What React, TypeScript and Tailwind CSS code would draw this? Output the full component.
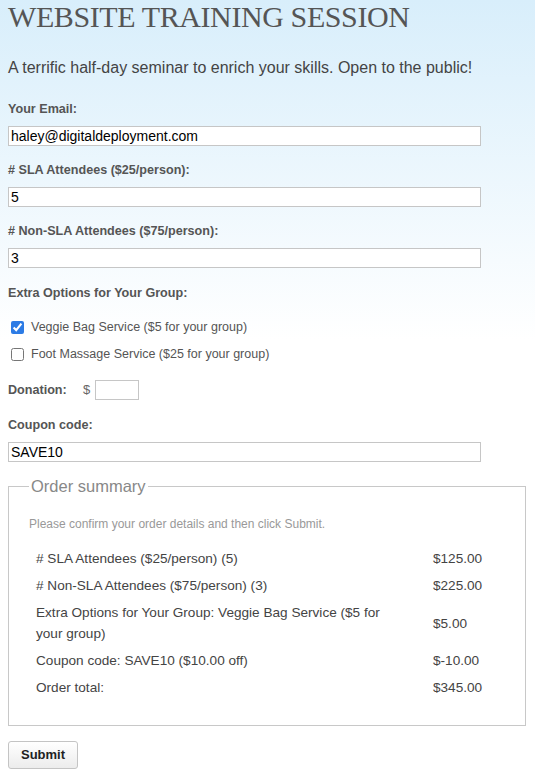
import React from 'react';

const sans = "font-['Liberation_Sans',Arial,sans-serif]";

function Field({ label, value, top }: { label: string; value: string; top: string }) {
  return (
    <div className={top}>
      <label className="block text-[12.6px] font-bold leading-[14px] text-[#555]">{label}</label>
      <input
        type="text"
        defaultValue={value}
        className="mt-[10px] block h-[20px] w-[473px] border border-[#c6c6c6] bg-white px-[2px] text-[14px] text-black outline-none"
      />
    </div>
  );
}

const rows: { desc: string; price: string }[] = [
  { desc: '# SLA Attendees ($25/person) (5)', price: '$125.00' },
  { desc: '# Non-SLA Attendees ($75/person) (3)', price: '$225.00' },
  { desc: 'Extra Options for Your Group: Veggie Bag Service ($5 for your group)', price: '$5.00' },
  { desc: 'Coupon code: SAVE10 ($10.00 off)', price: '$-10.00' },
  { desc: 'Order total:', price: '$345.00' },
];

export default function App() {
  return (
    <div className={`${sans} min-h-screen bg-[linear-gradient(#d8eefb,#ffffff_340px)] px-[8px] pb-[10px]`}>
      <h1 className="font-['Liberation_Serif','Times_New_Roman',serif] text-[30px] font-normal leading-[34px] tracking-[-0.4px] text-[#555]">
        WEBSITE TRAINING SESSION
      </h1>
      <p className="mt-[25px] text-[16px] leading-[18px] text-[#444]">
        A terrific half-day seminar to enrich your skills. Open to the public!
      </p>

      <form>
        <Field label="Your Email:" value="haley@digitaldeployment.com" top="mt-[25px]" />
        <Field label="# SLA Attendees ($25/person):" value="5" top="mt-[17px]" />
        <Field label="# Non-SLA Attendees ($75/person):" value="3" top="mt-[17px]" />

        <div className="mt-[18px] text-[12.6px] font-bold leading-[14px] text-[#555]">Extra Options for Your Group:</div>

        <div className="mt-[20px] flex flex-col gap-[13px] pl-[3px]">
          <label className="flex items-center gap-[7px] text-[12.5px] leading-[14px] text-[#555]">
            <input type="checkbox" defaultChecked className="m-0 h-[13px] w-[13px] accent-[#2c7be5]" />
            Veggie Bag Service ($5 for your group)
          </label>
          <label className="flex items-center gap-[7px] text-[12.5px] leading-[14px] text-[#555]">
            <input type="checkbox" className="m-0 h-[13px] w-[13px] accent-[#2c7be5]" />
            Foot Massage Service ($25 for your group)
          </label>
        </div>

        <div className="mt-[19px] flex items-center">
          <span className="w-[75px] text-[12.6px] font-bold text-[#555]">Donation:</span>
          <span className="text-[13px] text-[#666]">$</span>
          <input
            type="text"
            className="ml-[5px] h-[20px] w-[44px] border border-[#c6c6c6] bg-white px-[2px] text-[13px] outline-none"
          />
        </div>

        <Field label="Coupon code:" value="SAVE10" top="mt-[18px]" />

        <fieldset className="mt-[15px] w-[518px] border border-[#c8c8c8] px-[20px] pb-[24px] pt-0">
          <legend className="px-[2px] text-[16.5px] leading-[18px] text-[#888]">Order summary</legend>
          <p className="mt-[23px] text-[12px] leading-[13px] text-[#999]">
            Please confirm your order details and then click Submit.
          </p>
          <table className="mt-[14px] w-full border-collapse text-[13.6px] leading-[21px] text-[#444]">
            <tbody>
              {rows.map((r) => (
                <tr key={r.desc}>
                  <td className="w-[398px] py-[3px] pl-[7px] pr-[28px] align-middle">{r.desc}</td>
                  <td className="py-[3px] pl-[6px] align-middle">{r.price}</td>
                </tr>
              ))}
            </tbody>
          </table>
        </fieldset>

        <button
          type="button"
          className="mt-[15px] h-[28px] w-[70px] rounded-[3px] border border-[#c4c4c4] bg-[linear-gradient(#ffffff,#ececec)] text-[13px] font-bold text-[#222]"
        >
          Submit
        </button>
      </form>
    </div>
  );
}
